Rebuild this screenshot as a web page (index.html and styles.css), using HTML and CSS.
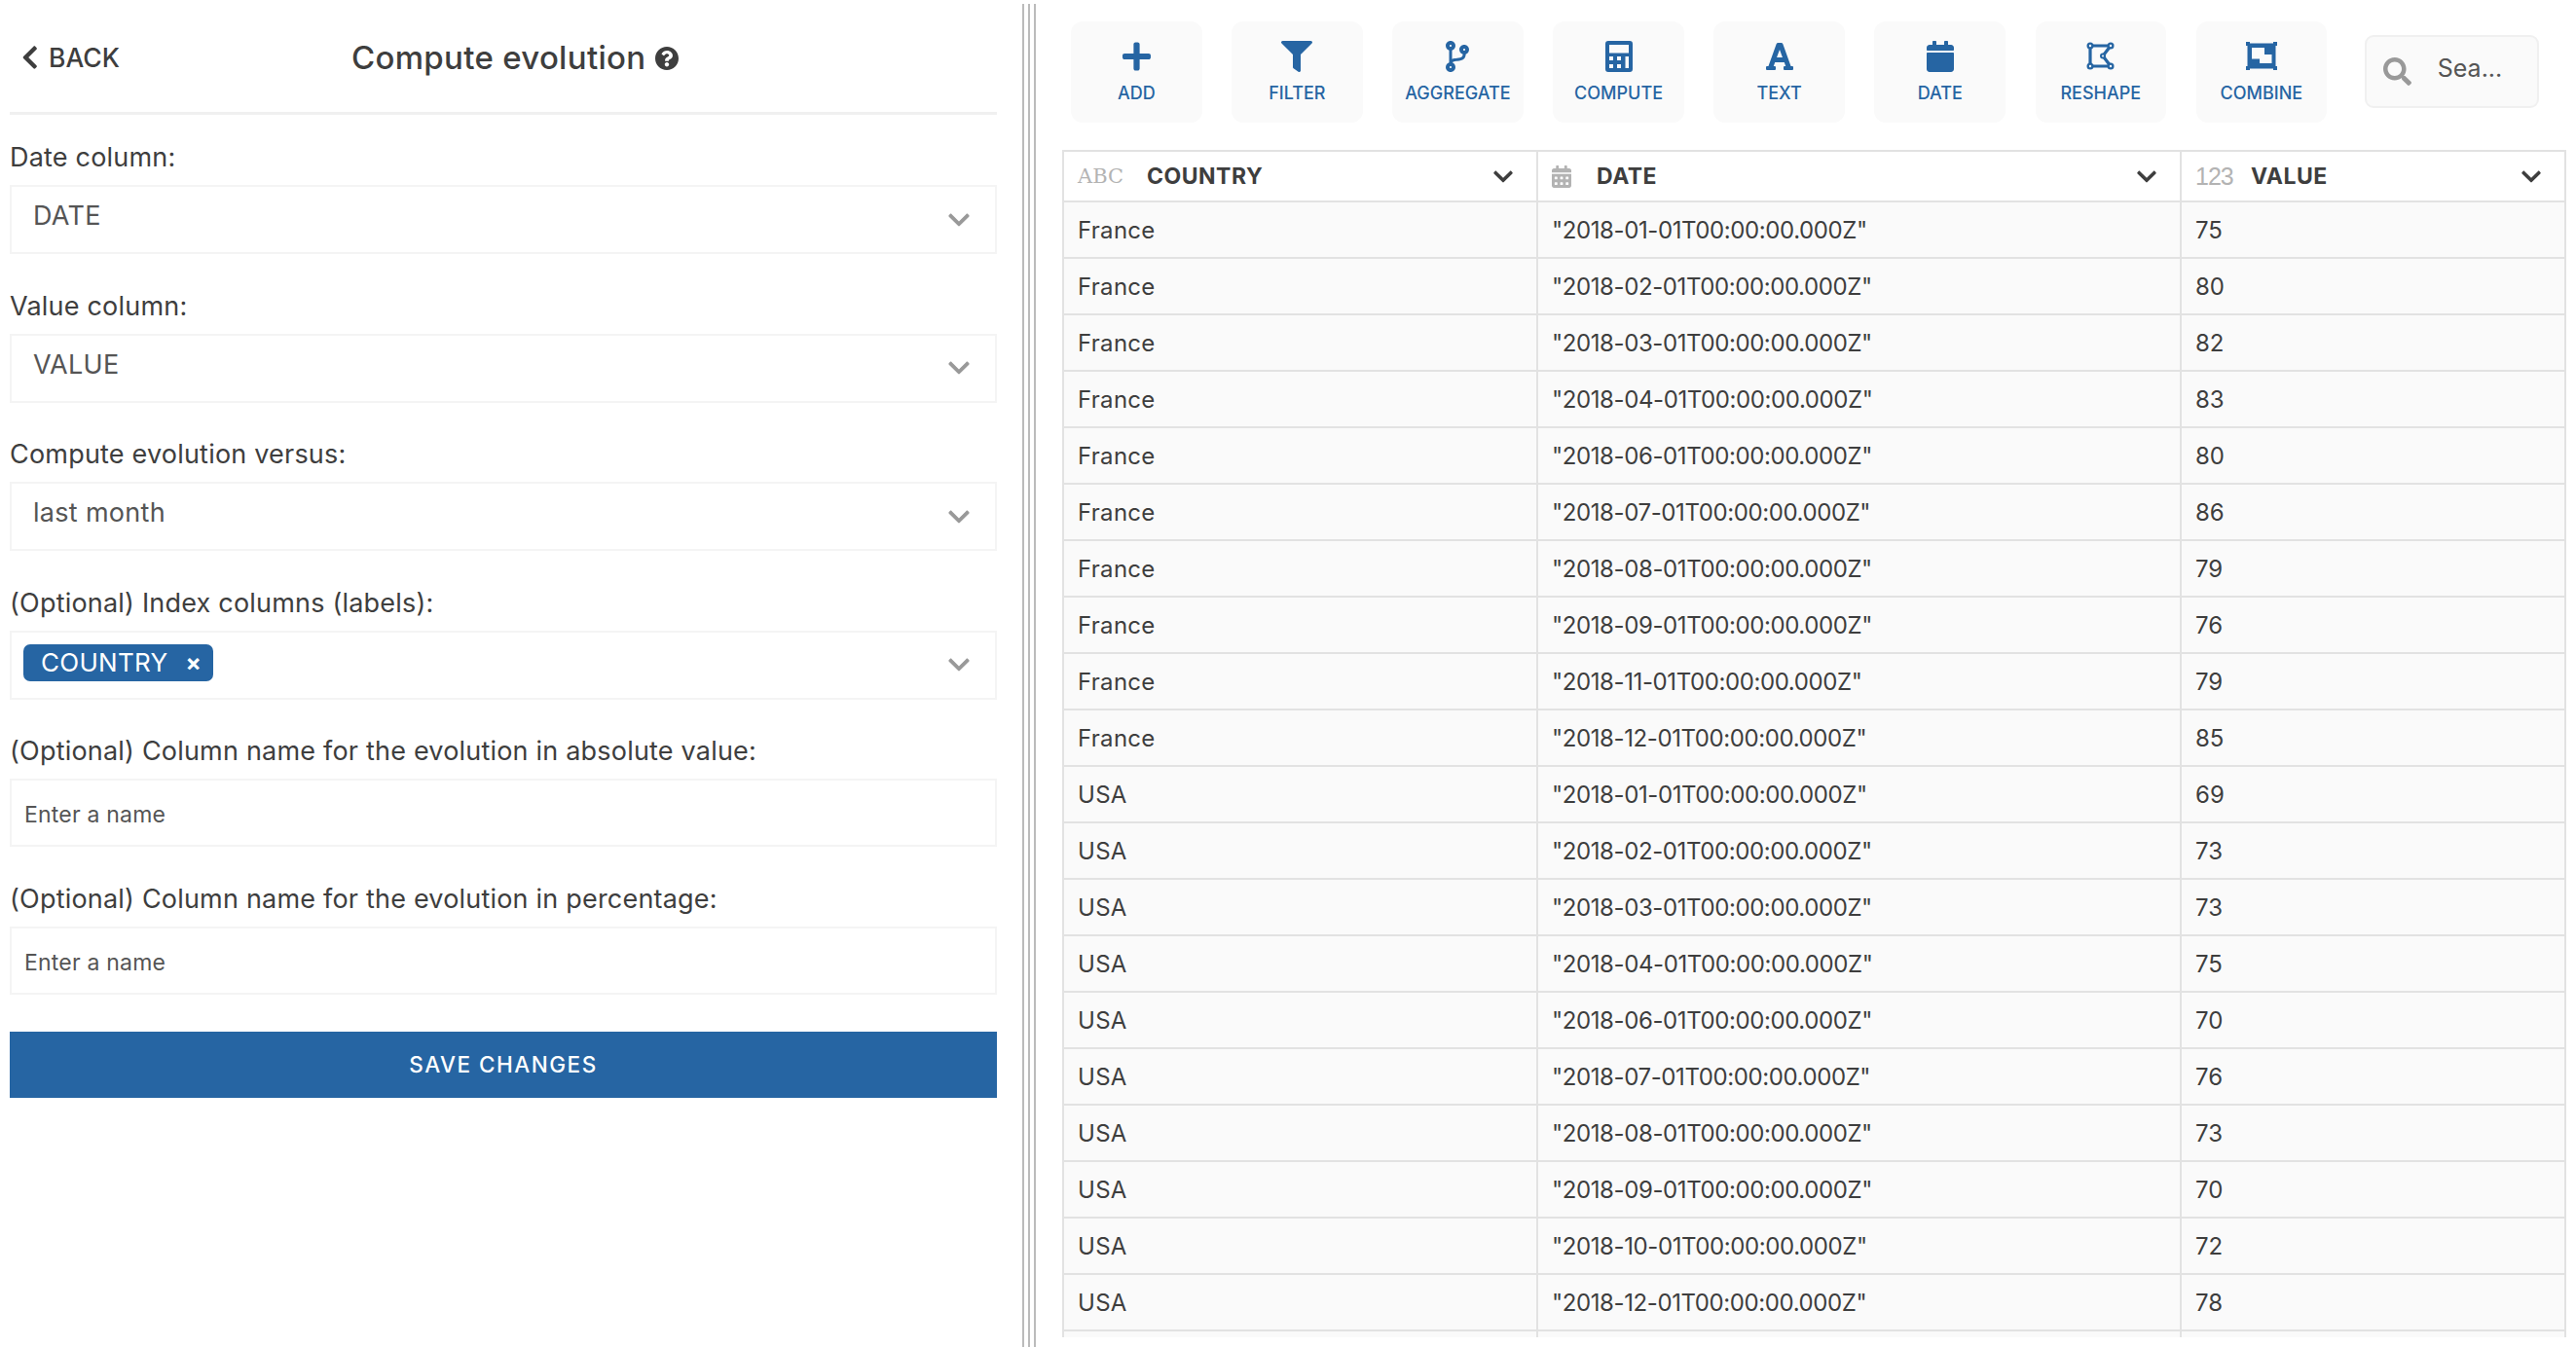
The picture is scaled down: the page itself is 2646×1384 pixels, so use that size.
FILE: index.html
```html
<!DOCTYPE html>
<html lang="en">
<head>
  <meta charset="UTF-8" />
  <title>Compute evolution</title>
  <link rel="stylesheet" href="styles.css">
</head>
<body>
  <svg class="defs" width="0" height="0">
    <symbol id="chev-down" viewBox="0 112 448 288"><path d="M207.029 381.476L12.686 187.132c-9.373-9.373-9.373-24.569 0-33.941l22.667-22.667c9.357-9.357 24.522-9.375 33.901-.04L224 284.505l154.745-154.021c9.379-9.335 24.544-9.317 33.901.04l22.667 22.667c9.373 9.373 9.373 24.569 0 33.941L240.971 381.476c-9.373 9.372-24.569 9.372-33.942 0z"/></symbol>
  </svg>

  <div class="left">
    <div class="head">
      <div class="back">
        <svg class="back-icon" viewBox="20 32 270 448"><path d="M34.52 239.03L228.87 44.69c9.37-9.37 24.57-9.37 33.94 0l22.67 22.67c9.36 9.36 9.37 24.52.04 33.9L131.49 256l154.02 154.75c9.34 9.38 9.32 24.54-.04 33.9l-22.67 22.67c-9.37 9.37-24.57 9.37-33.94 0L34.52 272.97c-9.37-9.37-9.37-24.57 0-33.94z"/></svg>
        <span>BACK</span>
      </div>
      <div class="title">Compute evolution</div>
      <svg class="help" viewBox="8 8 496 496"><path d="M504 256c0 136.997-111.043 248-248 248S8 392.997 8 256C8 119.083 119.043 8 256 8s248 111.083 248 248zM262.655 90c-54.497 0-89.255 22.957-116.549 63.758-3.536 5.286-2.353 12.415 2.715 16.258l34.699 26.31c5.205 3.947 12.621 3.008 16.665-2.122 17.864-22.658 30.113-35.797 57.303-35.797 20.429 0 45.698 13.148 45.698 32.958 0 14.976-12.363 22.667-32.534 33.976C247.128 238.528 216 254.941 216 296v4c0 6.627 5.373 12 12 12h56c6.627 0 12-5.373 12-12v-1.333c0-28.462 83.186-29.647 83.186-106.667 0-58.002-60.165-102-116.531-102zM256 338c-25.365 0-46 20.635-46 46 0 25.364 20.635 46 46 46s46-20.636 46-46c0-25.365-20.635-46-46-46z"/></svg>
    </div>

    <div class="field">
      <div class="label">Date column:</div>
      <div class="select"><span class="value">DATE</span><svg class="select-chev"><use href="#chev-down"/></svg></div>
    </div>
    <div class="field">
      <div class="label">Value column:</div>
      <div class="select"><span class="value">VALUE</span><svg class="select-chev"><use href="#chev-down"/></svg></div>
    </div>
    <div class="field">
      <div class="label">Compute evolution versus:</div>
      <div class="select"><span class="value">last month</span><svg class="select-chev"><use href="#chev-down"/></svg></div>
    </div>
    <div class="field">
      <div class="label">(Optional) Index columns (labels):</div>
      <div class="select multi">
        <span class="chip">COUNTRY<span class="chip-x">×</span></span>
        <svg class="select-chev"><use href="#chev-down"/></svg>
      </div>
    </div>
    <div class="field">
      <div class="label">(Optional) Column name for the evolution in absolute value:</div>
      <div class="input">Enter a name</div>
    </div>
    <div class="field">
      <div class="label">(Optional) Column name for the evolution in percentage:</div>
      <div class="input">Enter a name</div>
    </div>
    <div class="save">SAVE CHANGES</div>
  </div>

  <div class="splitter"></div>

  <div class="right">
    <div class="toolbar">
      <div class="tool">
        <svg class="tool-icon" style="width:29px" viewBox="0 32 448 448"><path d="M416 208H272V64c0-17.67-14.33-32-32-32h-32c-17.67 0-32 14.33-32 32v144H32c-17.67 0-32 14.33-32 32v32c0 17.67 14.33 32 32 32h144v144c0 17.67 14.33 32 32 32h32c17.67 0 32-14.33 32-32V304h144c17.67 0 32-14.33 32-32v-32c0-17.67-14.33-32-32-32z"/></svg>
        <span>ADD</span>
      </div>
      <div class="tool">
        <svg class="tool-icon" style="width:32px" viewBox="0 0 512 512"><path d="M487.976 0H24.028C2.71 0-8.047 25.866 7.058 40.971L192 225.941V432c0 7.831 3.821 15.17 10.237 19.662l80 55.98C298.02 518.69 320 507.493 320 487.98V225.941l184.947-184.97C520.021 25.896 509.338 0 487.976 0z"/></svg>
        <span>FILTER</span>
      </div>
      <div class="tool">
        <svg class="tool-icon" style="width:24px" viewBox="0 0 384 512"><path d="M384 144c0-44.2-35.8-80-80-80s-80 35.8-80 80c0 36.4 24.3 67.1 57.5 76.8-.6 16.1-4.2 28.5-11 36.9-15.4 19.2-49.3 22.4-85.2 25.7-28.2 2.6-57.4 5.4-81.3 16.9v-144c32.5-10.2 56-40.5 56-76.3 0-44.2-35.8-80-80-80S0 35.8 0 80c0 35.8 23.5 66.1 56 76.3v199.3C23.5 365.9 0 396.2 0 432c0 44.2 35.8 80 80 80s80-35.8 80-80c0-34-21.2-63.1-51.2-74.6 3.1-5.2 7.8-9.8 14.9-13.4 16.2-8.2 40.4-10.4 66.1-12.8 42.2-3.9 90-8.4 118.2-43.4 14-17.4 21.1-39.8 21.6-67.9 31.6-10.8 54.4-40.7 54.4-75.9zM80 64c8.8 0 16 7.2 16 16s-7.2 16-16 16-16-7.2-16-16 7.2-16 16-16zm0 384c-8.8 0-16-7.2-16-16s7.2-16 16-16 16 7.2 16 16-7.2 16-16 16zm224-320c8.8 0 16 7.2 16 16s-7.2 16-16 16-16-7.2-16-16 7.2-16 16-16z"/></svg>
        <span>AGGREGATE</span>
      </div>
      <div class="tool">
        <svg class="tool-icon" style="width:28px" viewBox="0 0 28 32"><path fill-rule="evenodd" d="M3 0h22a3 3 0 0 1 3 3v26a3 3 0 0 1-3 3H3a3 3 0 0 1-3-3V3a3 3 0 0 1 3-3zM4 4v8.5h20V4zM4 16v4h4v-4zM12 16v4h4v-4zM20.500 16v12H24V16zM4 24v4h4v-4zM12 24v4h4v-4z"/></svg>
        <span>COMPUTE</span>
      </div>
      <div class="tool">
        <svg class="tool-icon" style="width:28px" viewBox="0 16 448 480"><path d="M432 416h-23.41L277.88 53.69A32 32 0 0 0 247.58 32h-47.16a32 32 0 0 0-30.3 21.69L39.41 416H16a16 16 0 0 0-16 16v32a16 16 0 0 0 16 16h128a16 16 0 0 0 16-16v-32a16 16 0 0 0-16-16h-19.6l23.3-64h152.6l23.3 64H304a16 16 0 0 0-16 16v32a16 16 0 0 0 16 16h128a16 16 0 0 0 16-16v-32a16 16 0 0 0-16-16zM176.850 272L224 142.51 271.15 272z"/></svg>
        <span>TEXT</span>
      </div>
      <div class="tool">
        <svg class="tool-icon" style="width:28px" viewBox="0 0 448 512"><path d="M12 192h424c6.6 0 12 5.4 12 12v260c0 26.5-21.5 48-48 48H48c-26.5 0-48-21.5-48-48V204c0-6.6 5.400-12 12-12zm436-44v-36c0-26.5-21.500-48-48-48h-48V12c0-6.600-5.400-12-12-12h-40c-6.600 0-12 5.400-12 12v52H160V12c0-6.600-5.400-12-12-12h-40c-6.600 0-12 5.400-12 12v52H48C21.500 64 0 85.500 0 112v36c0 6.600 5.400 12 12 12h424c6.600 0 12-5.400 12-12z"/></svg>
        <span>DATE</span>
      </div>
      <div class="tool">
        <svg class="tool-icon" style="width:29px" viewBox="0 -1 29 32">
          <path class="line" d="M4 4H25L17 14.500 25 25H4z"/>
          <circle cx="4" cy="4" r="3.500"/><circle cx="25" cy="4" r="3.500"/><circle cx="25" cy="25" r="3.500"/><circle cx="4" cy="25" r="3.500"/><circle cx="17" cy="14.500" r="3"/>
          <circle class="hole" cx="4" cy="4" r="1.200"/><circle class="hole" cx="25" cy="4" r="1.200"/><circle class="hole" cx="25" cy="25" r="1.200"/><circle class="hole" cx="4" cy="25" r="1.200"/><circle class="hole" cx="17" cy="14.500" r="1"/>
        </svg>
        <span>RESHAPE</span>
      </div>
      <div class="tool">
        <svg class="tool-icon" style="width:32px" viewBox="0 -1 32 32"><path fill-rule="evenodd" d="M0 0h4v1.500h24V0h4v4h-1.500v21H32v4h-4v-1.500H4V29H0v-4h1.500V4H0zM6 6v11.500h13V6zM19 13v4.500h-5v4.500h12.500v-9z"/></svg>
        <span>COMBINE</span>
      </div>
      <div class="search">
        <svg class="search-icon" viewBox="0 0 512 512"><path d="M505 442.7L405.3 343c-4.500-4.500-10.600-7-17-7H372c27.600-35.300 44-79.700 44-128C416 93.100 322.900 0 208 0S0 93.100 0 208s93.100 208 208 208c48.300 0 92.700-16.400 128-44v16.300c0 6.400 2.500 12.500 7 17l99.700 99.700c9.400 9.400 24.600 9.400 33.900 0l28.300-28.300c9.400-9.400 9.400-24.600.1-34zM208 336c-70.700 0-128-57.200-128-128 0-70.700 57.200-128 128-128 70.700 0 128 57.200 128 128 0 70.700-57.200 128-128 128z"/></svg>
        <span>Sea...</span>
      </div>
    </div>

    <div class="table-wrap">
      <table class="grid">
        <thead>
          <tr>
            <th class="col-country"><div class="th"><span class="type serif">ABC</span><span class="name">COUNTRY</span><svg class="th-chev"><use href="#chev-down"/></svg></div></th>
            <th class="col-date"><div class="th"><svg class="type-cal" viewBox="0 0 448 512"><path d="M0 464c0 26.500 21.500 48 48 48h352c26.500 0 48-21.500 48-48V192H0v272zm320-196c0-6.600 5.400-12 12-12h40c6.600 0 12 5.400 12 12v40c0 6.600-5.400 12-12 12h-40c-6.600 0-12-5.400-12-12v-40zm0 128c0-6.600 5.400-12 12-12h40c6.600 0 12 5.400 12 12v40c0 6.600-5.400 12-12 12h-40c-6.600 0-12-5.400-12-12v-40zM192 268c0-6.600 5.400-12 12-12h40c6.600 0 12 5.400 12 12v40c0 6.600-5.400 12-12 12h-40c-6.600 0-12-5.400-12-12v-40zm0 128c0-6.600 5.400-12 12-12h40c6.600 0 12 5.400 12 12v40c0 6.600-5.400 12-12 12h-40c-6.600 0-12-5.400-12-12v-40zM64 268c0-6.600 5.400-12 12-12h40c6.600 0 12 5.400 12 12v40c0 6.600-5.400 12-12 12H76c-6.600 0-12-5.400-12-12v-40zm0 128c0-6.600 5.400-12 12-12h40c6.600 0 12 5.400 12 12v40c0 6.600-5.400 12-12 12H76c-6.600 0-12-5.400-12-12v-40zM400 64h-48V16c0-8.800-7.200-16-16-16h-32c-8.800 0-16 7.200-16 16v48H160V16c0-8.800-7.200-16-16-16h-32c-8.800 0-16 7.200-16 16v48H48C21.500 64 0 85.500 0 112v48h448v-48c0-26.500-21.500-48-48-48z"/></svg><span class="name">DATE</span><svg class="th-chev"><use href="#chev-down"/></svg></div></th>
            <th class="col-value"><div class="th"><span class="type num">123</span><span class="name">VALUE</span><svg class="th-chev"><use href="#chev-down"/></svg></div></th>
          </tr>
        </thead>
        <tbody>
          <tr><td>France</td><td>"2018-01-01T00:00:00.000Z"</td><td>75</td></tr>
          <tr><td>France</td><td>"2018-02-01T00:00:00.000Z"</td><td>80</td></tr>
          <tr><td>France</td><td>"2018-03-01T00:00:00.000Z"</td><td>82</td></tr>
          <tr><td>France</td><td>"2018-04-01T00:00:00.000Z"</td><td>83</td></tr>
          <tr><td>France</td><td>"2018-06-01T00:00:00.000Z"</td><td>80</td></tr>
          <tr><td>France</td><td>"2018-07-01T00:00:00.000Z"</td><td>86</td></tr>
          <tr><td>France</td><td>"2018-08-01T00:00:00.000Z"</td><td>79</td></tr>
          <tr><td>France</td><td>"2018-09-01T00:00:00.000Z"</td><td>76</td></tr>
          <tr><td>France</td><td>"2018-11-01T00:00:00.000Z"</td><td>79</td></tr>
          <tr><td>France</td><td>"2018-12-01T00:00:00.000Z"</td><td>85</td></tr>
          <tr><td>USA</td><td>"2018-01-01T00:00:00.000Z"</td><td>69</td></tr>
          <tr><td>USA</td><td>"2018-02-01T00:00:00.000Z"</td><td>73</td></tr>
          <tr><td>USA</td><td>"2018-03-01T00:00:00.000Z"</td><td>73</td></tr>
          <tr><td>USA</td><td>"2018-04-01T00:00:00.000Z"</td><td>75</td></tr>
          <tr><td>USA</td><td>"2018-06-01T00:00:00.000Z"</td><td>70</td></tr>
          <tr><td>USA</td><td>"2018-07-01T00:00:00.000Z"</td><td>76</td></tr>
          <tr><td>USA</td><td>"2018-08-01T00:00:00.000Z"</td><td>73</td></tr>
          <tr><td>USA</td><td>"2018-09-01T00:00:00.000Z"</td><td>70</td></tr>
          <tr><td>USA</td><td>"2018-10-01T00:00:00.000Z"</td><td>72</td></tr>
          <tr><td>USA</td><td>"2018-12-01T00:00:00.000Z"</td><td>78</td></tr>
          <tr><td></td><td></td><td></td></tr>
        </tbody>
      </table>
    </div>
  </div>
</body>
</html>
```

FILE: styles.css
```css
* {
  box-sizing: border-box;
}
body {
  margin: 0;
  height: 100vh;
  display: flex;
  overflow: hidden;
  background: #fff;
  color: #3e3e3e;
  font-family: Inter, "Noto Sans", sans-serif;
}
.defs {
  position: absolute;
}

/* left form */
.left {
  width: 1050px;
  flex: none;
  padding: 0 26px 0 10px;
}
.head {
  height: 118px;
  display: flex;
  align-items: center;
  padding-top: 2px;
  border-bottom: 3px solid #f0f0f0;
  margin-bottom: 26px;
}
.back {
  width: 351px;
  display: flex;
  align-items: center;
  padding-left: 13px;
  font-size: 26.5px;
  font-weight: 500;
}
.back-icon {
  width: 15px;
  height: 24px;
  margin-right: 12px;
  fill: #3e3e3e;
}
.title {
  font-size: 33px;
  font-weight: 500;
  letter-spacing: 0.3px;
}
.help {
  width: 24px;
  height: 24px;
  margin: 3px 0 0 10px;
  fill: #3e3e3e;
}
.field {
  margin-bottom: 35.5px;
}
.label {
  height: 36px;
  line-height: 36px;
  margin-bottom: 10px;
  font-size: 27px;
  letter-spacing: 0.2px;
}
.select {
  height: 71px;
  border: 2px solid #f4f4f4;
  display: flex;
  align-items: center;
  padding: 0 25px 0 22px;
  font-size: 27px;
  letter-spacing: 0.3px;
  color: #555;
}
.value {
  flex: 1;
  margin-top: -8px;
}
.multi {
  padding-left: 12px;
  justify-content: space-between;
}
.select-chev {
  width: 24px;
  height: 14px;
  fill: #999;
}
.chip {
  height: 38px;
  margin-top: -5px;
  display: flex;
  align-items: center;
  padding: 0 12px 0 18px;
  background: #2665a3;
  border-radius: 7px;
  color: #fff;
  font-size: 26px;
  letter-spacing: 0.3px;
}
.chip-x {
  margin-left: 18px;
  font-weight: 700;
  font-size: 24px;
}
.input {
  height: 70px;
  border: 2px solid #f4f4f4;
  display: flex;
  align-items: center;
  padding: 4px 0 0 13px;
  font-size: 23px;
  letter-spacing: 0.2px;
  color: #555;
}
.save {
  height: 68px;
  margin-top: 38px;
  display: flex;
  align-items: center;
  justify-content: center;
  background: #2665a3;
  color: #fff;
  font-size: 22.5px;
  font-weight: 500;
  letter-spacing: 1.5px;
}

/* the three thin lines between the panes */
.splitter {
  width: 14px;
  flex: none;
  margin-top: 4px;
  background: linear-gradient(to right, #bbb 0 2px, #fff 2px 6px, #bbb 6px 8px, #fff 8px 12px, #bbb 12px 14px);
}

/* right pane */
.right {
  flex: 1;
  min-width: 0;
  padding: 22px 10px 0 27px;
}
.toolbar {
  display: flex;
  gap: 30.6px;
  margin-left: 9px;
  height: 104px;
}
.tool {
  width: 134.500px;
  flex: none;
  display: flex;
  flex-direction: column;
  align-items: center;
  padding-top: 20px;
  background: #fafafa;
  border-radius: 12px;
  color: #2665a3;
  font-size: 18px;
  font-weight: 500;
}
.tool-icon {
  height: 32px;
  fill: #2665a3;
  margin-bottom: 11px;
}
.tool-icon .line {
  fill: none;
  stroke: #2665a3;
  stroke-width: 3.2;
}
.tool-icon .hole {
  fill: #fafafa;
}
.search {
  width: 179px;
  height: 75px;
  margin: 14px 0 0 8px;
  display: flex;
  align-items: center;
  padding: 0 0 8px 17px;
  background: #fafafa;
  border: 2px solid #f0f0f0;
  border-radius: 9px;
  font-size: 25px;
  color: #555;
}
.search-icon {
  width: 29px;
  height: 29px;
  fill: #999;
  margin: 8px 27px 0 0;
}
.table-wrap {
  height: 1220px;
  margin-top: 28px;
  overflow: hidden;
  border-top: 2px solid #e2e2e2;
  border-left: 2px solid #e2e2e2;
  width: 1545px;
}
.grid {
  width: 100%;
  table-layout: fixed;
  border-collapse: separate;
  border-spacing: 0;
  font-size: 24px;
}
.col-country {
  width: 487px;
}
.col-date {
  width: 661px;
}
.grid th {
  height: 52px;
  padding: 0 24px 0 14px;
  background: #fff;
  border-right: 2px solid #e2e2e2;
  border-bottom: 2px solid #e2e2e2;
  text-align: left;
}
.grid td {
  height: 58px;
  padding: 0 14px;
  background: #fafafa;
  border-right: 2px solid #e2e2e2;
  border-bottom: 2px solid #e2e2e2;
}
.grid td:nth-child(1) {
  letter-spacing: 0.3px;
}
.grid td:nth-child(2) {
  letter-spacing: -0.4px;
}
.th {
  display: flex;
  align-items: center;
}
.type {
  color: #b3b3b3;
  font-size: 24px;
  font-weight: 400;
}
.serif {
  width: 71px;
  font-family: "DejaVu Serif", serif;
  font-size: 21px;
}
.num {
  width: 57px;
  font-family: "Liberation Sans", sans-serif;
  font-size: 25px;
  letter-spacing: -1px;
}
.type-cal {
  width: 20px;
  height: 23px;
  fill: #b3b3b3;
  margin-right: 26px;
}
.name {
  flex: 1;
  font-size: 23px;
  font-weight: 700;
  letter-spacing: 0.5px;
}
.th-chev {
  width: 20px;
  height: 13px;
  fill: #3e3e3e;
}
```
